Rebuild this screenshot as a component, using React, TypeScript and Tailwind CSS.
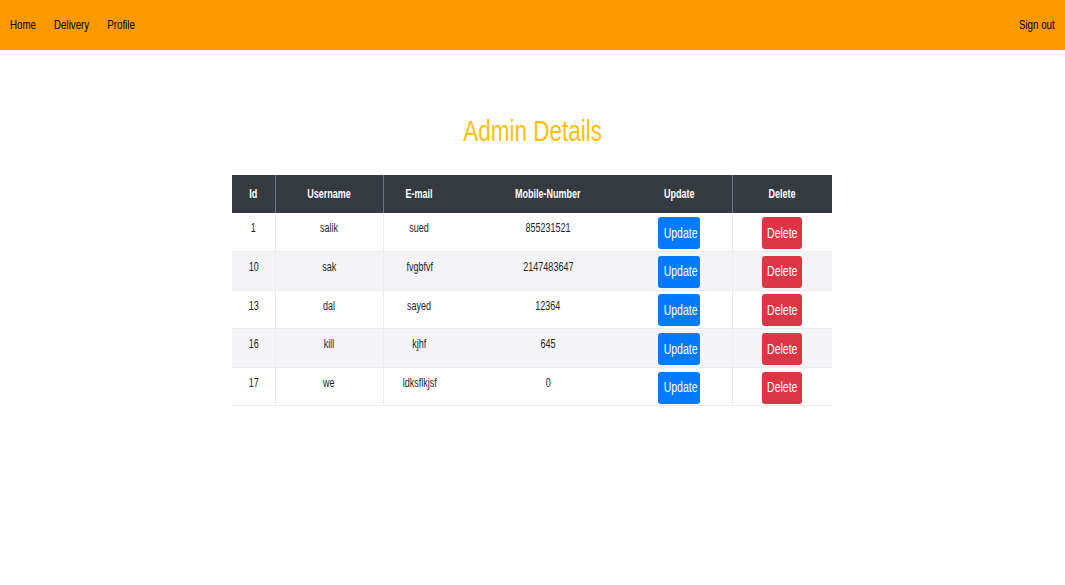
import React from 'react'

const rows = [
  { id: 1, username: 'salik', email: 'sued', mobile: '855231521' },
  { id: 10, username: 'sak', email: 'fvgbfvf', mobile: '2147483647' },
  { id: 13, username: 'dal', email: 'sayed', mobile: '12364' },
  { id: 16, username: 'kill', email: 'kjhf', mobile: '645' },
  { id: 17, username: 'we', email: 'ldksflkjsf', mobile: '0' },
]

const font = { fontFamily: '"Liberation Sans", Arial, sans-serif' }

// the screenshot's type is squeezed sideways, so narrow each label
function N({ children }: { children: React.ReactNode }) {
  return <span className="inline-block scale-x-75 origin-center whitespace-nowrap">{children}</span>
}

export default function App() {
  return (
    <div className="min-h-[585px] bg-white text-[#212529]" style={font}>
      {/* Navbar */}
      <nav className="h-[50px] bg-[#ff9900] flex items-center justify-between px-[10px] text-[13px] text-black">
        <div className="flex gap-[24px] scale-x-75 origin-left whitespace-nowrap">
          <a href="#">Home</a>
          <a href="#">Delivery</a>
          <a href="#">Profile</a>
        </div>
        <a href="#" className="scale-x-75 origin-right whitespace-nowrap">Sign out</a>
      </nav>

      <h1 className="text-center text-[30px] text-[#ffc107] mt-[61px] leading-[40px]">
        <N>Admin Details</N>
      </h1>

      <div className="flex justify-center mt-[24px]">
        <table className="w-[600px] border-collapse text-[12px] ml-[-1px]">
          <thead>
            <tr className="bg-[#343a40] text-white h-[38px] font-bold">
              <th className="w-[43px] border-r border-[#6c757d]"><N>Id</N></th>
              <th className="w-[108px] border-r border-[#6c757d]"><N>Username</N></th>
              <th className="w-[72px]"><N>E-mail</N></th>
              <th className="w-[186px]"><N>Mobile-Number</N></th>
              <th className="w-[91px] pr-[14px] border-r border-[#6c757d]"><N>Update</N></th>
              <th className="w-[100px]"><N>Delete</N></th>
            </tr>
          </thead>
          <tbody>
            {rows.map((r, i) => (
              <tr key={r.id} className={`h-[38.6px] border-b border-[#e9ecef] ${i % 2 === 1 ? 'bg-[#f4f4f7]' : 'bg-white'}`}>
                <td className="text-center align-top pt-[6px] border-r border-[#e9ecef]"><N>{r.id}</N></td>
                <td className="text-center align-top pt-[6px] border-r border-[#e9ecef]"><N>{r.username}</N></td>
                <td className="text-center align-top pt-[6px]"><N>{r.email}</N></td>
                <td className="text-center align-top pt-[6px]"><N>{r.mobile}</N></td>
                <td className="text-center align-middle pr-[14px] border-r border-[#e9ecef]">
                  <button className="bg-[#007bff] text-white rounded-[3px] w-[42px] h-[32px] text-[14px] mt-[2px]">
                    <N>Update</N>
                  </button>
                </td>
                <td className="text-center align-middle">
                  <button className="bg-[#dc3545] text-white rounded-[3px] w-[40px] h-[32px] text-[14px] mt-[2px]">
                    <N>Delete</N>
                  </button>
                </td>
              </tr>
            ))}
          </tbody>
        </table>
      </div>
    </div>
  )
}
